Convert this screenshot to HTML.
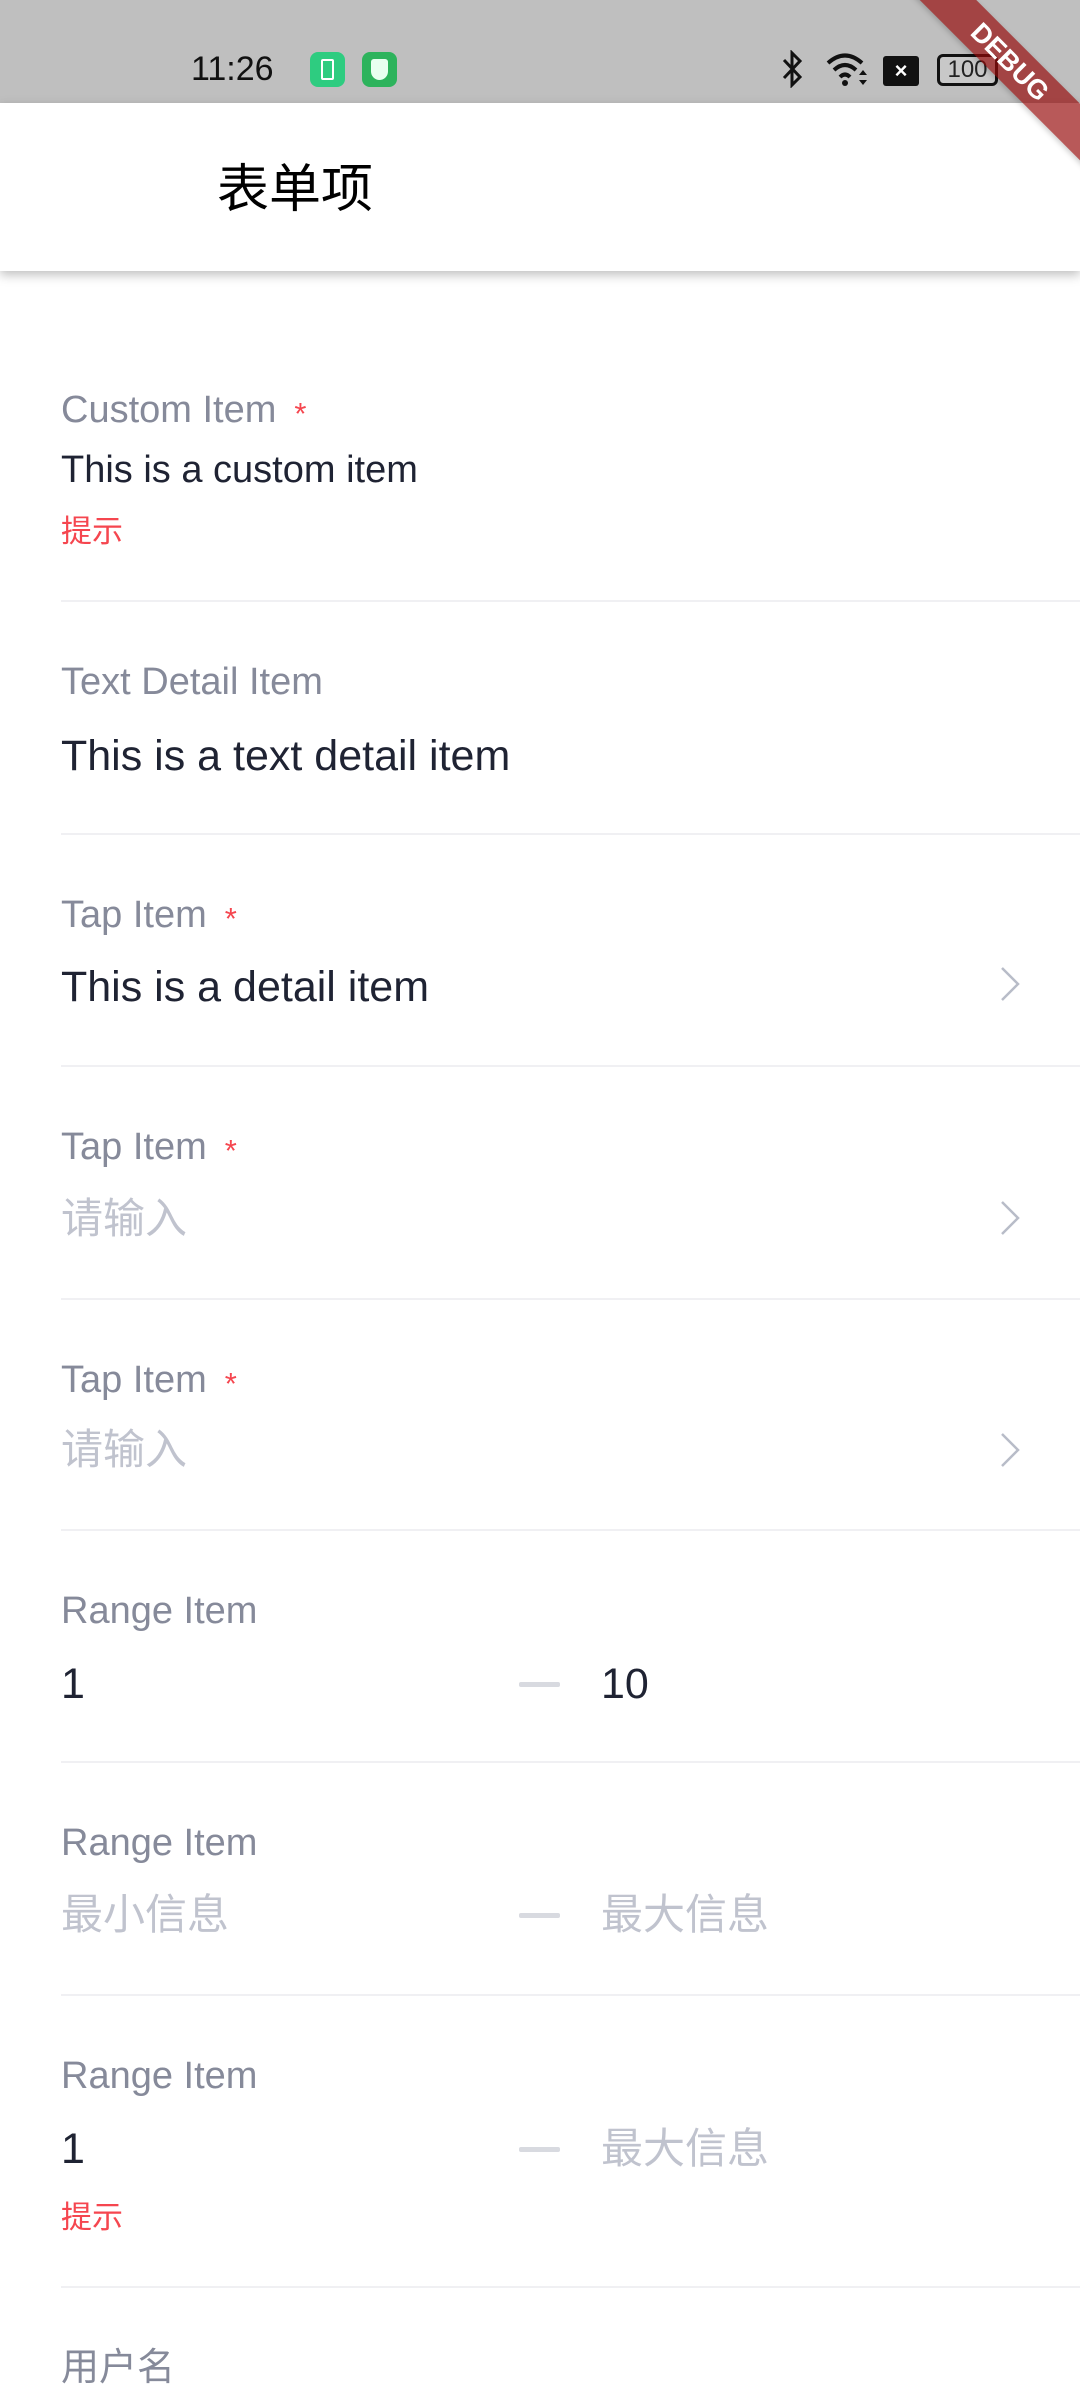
<!DOCTYPE html>
<html><head><meta charset="utf-8">
<style>
*{margin:0;padding:0;box-sizing:border-box}
html,body{width:1080px;height:2400px;overflow:hidden;background:#fff;font-family:"Liberation Sans","Noto Sans CJK SC",sans-serif;position:relative}
.t{position:absolute;height:60px;line-height:60px;white-space:nowrap}
.lab{font-size:38px;color:#868a9a;left:61px}
.val{font-size:43px;color:#1f2333;left:61px}
.ph{font-size:42px;color:#c0c3ce}
.hint{font-size:31px;color:#f5464f;left:61px}
.star{color:#f5464f;font-size:31px;margin-left:18px;vertical-align:top;position:relative;top:4px}
.div{position:absolute;left:61px;right:0;height:2px;background:#f0f0f3}
.dash{position:absolute;left:519px;width:41px;height:5px;background:#d8dae0;border-radius:2px}
.chev{position:absolute;left:998px;width:24px;height:40px}
</style></head><body>
<div style="position:absolute;left:0;top:0;width:1080px;height:103px;background:#bfbfbf"></div>
<div class="t" style="left:191px;top:39px;font-size:34px;color:#111">11:26</div>
<div style="position:absolute;left:310px;top:52px;width:35px;height:35px;border-radius:8px;background:#2ecc80"></div>
<div style="position:absolute;left:321px;top:59px;width:13px;height:21px;border:2px solid #fff;border-radius:2px"></div>
<div style="position:absolute;left:362px;top:52px;width:35px;height:35px;border-radius:8px;background:#2db35c"></div>
<div style="position:absolute;left:371px;top:59px;width:17px;height:21px;background:#e8fff0;border-radius:3px 3px 9px 9px"></div>
<svg style="position:absolute;left:780px;top:50px" width="24" height="38" viewBox="0 0 24 38"><path d="M4 10 L20 27 L12 35 V3 L20 11 L4 28" fill="none" stroke="#111" stroke-width="3"/></svg>
<svg style="position:absolute;left:825px;top:50px" width="46" height="38" viewBox="0 0 46 38"><path d="M3 13 Q20 -2 37 13" fill="none" stroke="#111" stroke-width="4"/><path d="M9 20 Q20 10 31 20" fill="none" stroke="#111" stroke-width="4"/><path d="M15 27 Q20 22 25 27" fill="none" stroke="#111" stroke-width="4"/><circle cx="20" cy="33" r="3" fill="#111"/><path d="M34 25 l4 -5 l4 5z M34 30 l4 5 l4 -5z" fill="#111"/></svg>
<div style="position:absolute;left:883px;top:56px;width:36px;height:30px;background:#111;border-radius:3px;color:#fff;font-size:22px;font-weight:bold;text-align:center;line-height:30px">×</div>
<div style="position:absolute;left:937px;top:54px;width:61px;height:32px;border:3px solid #111;border-radius:6px;font-size:24px;line-height:26px;text-align:center;color:#222;background:#c8c8c8">100</div>
<div style="position:absolute;left:0;top:103px;width:1080px;height:168px;background:#fff;box-shadow:0 4px 10px rgba(0,0,0,0.25)"></div>
<div class="t" style="left:217px;top:160px;font-size:52px;color:#000">表单项</div>

<div class="t lab" style="top:380px">Custom Item<span class="star">*</span></div>
<div class="t val" style="top:440px;font-size:38px">This is a custom item</div>
<div class="t hint" style="top:502px">提示</div>
<div class="div" style="top:600px"></div>

<div class="t lab" style="top:652px">Text Detail Item</div>
<div class="t val" style="top:726px">This is a text detail item</div>
<div class="div" style="top:833px"></div>

<div class="t lab" style="top:885px">Tap Item<span class="star">*</span></div>
<div class="t val" style="top:957px">This is a detail item</div>
<svg class="chev" style="top:964px" viewBox="0 0 24 40"><path d="M4 4 L20 20 L4 36" fill="none" stroke="#b8bcc8" stroke-width="2.5"/></svg>
<div class="div" style="top:1065px"></div>

<div class="t lab" style="top:1117px">Tap Item<span class="star">*</span></div>
<div class="t ph" style="left:61px;top:1189px">请输入</div>
<svg class="chev" style="top:1198px" viewBox="0 0 24 40"><path d="M4 4 L20 20 L4 36" fill="none" stroke="#b8bcc8" stroke-width="2.5"/></svg>
<div class="div" style="top:1298px"></div>

<div class="t lab" style="top:1350px">Tap Item<span class="star">*</span></div>
<div class="t ph" style="left:61px;top:1420px">请输入</div>
<svg class="chev" style="top:1430px" viewBox="0 0 24 40"><path d="M4 4 L20 20 L4 36" fill="none" stroke="#b8bcc8" stroke-width="2.5"/></svg>
<div class="div" style="top:1529px"></div>

<div class="t lab" style="top:1581px">Range Item</div>
<div class="t val" style="top:1654px">1</div>
<div class="dash" style="top:1682px"></div>
<div class="t val" style="left:601px;top:1654px">10</div>
<div class="div" style="top:1761px"></div>

<div class="t lab" style="top:1813px">Range Item</div>
<div class="t ph" style="left:61px;top:1885px">最小信息</div>
<div class="dash" style="top:1913px"></div>
<div class="t ph" style="left:601px;top:1885px">最大信息</div>
<div class="div" style="top:1994px"></div>

<div class="t lab" style="top:2046px">Range Item</div>
<div class="t val" style="top:2119px">1</div>
<div class="dash" style="top:2147px"></div>
<div class="t ph" style="left:601px;top:2119px">最大信息</div>
<div class="t hint" style="top:2188px">提示</div>
<div class="div" style="top:2286px"></div>

<div class="t lab" style="top:2338px">用户名</div>

<div style="position:absolute;left:810px;top:42px;width:400px;height:40px;background:rgba(150,10,10,0.68);transform:rotate(45deg);color:#fff;font-weight:bold;font-size:27px;line-height:40px;text-align:center;box-shadow:0 2px 6px rgba(0,0,0,0.2)">DEBUG</div>
</body></html>
